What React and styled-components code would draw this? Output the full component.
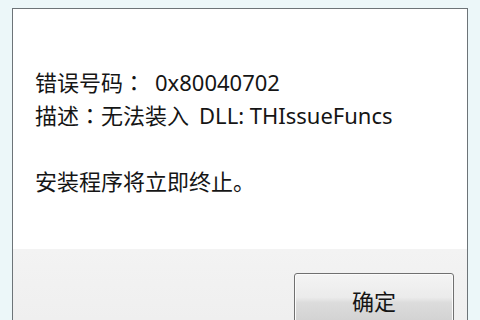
import React from 'react';
import styled, { createGlobalStyle } from 'styled-components';

const GlobalStyle = createGlobalStyle`
  html, body {
    margin: 0;
    padding: 0;
    width: 480px;
    height: 320px;
    overflow: hidden;
    background: #ecf7f9;
  }
`;

const Page = styled.div`
  box-sizing: border-box;
  width: 480px;
  height: 320px;
  padding: 8px 12px 0 12px;
  font-family: "Noto Sans", "Noto Sans CJK SC", sans-serif;
  color: #151515;
`;

const Dialog = styled.div`
  box-sizing: border-box;
  width: 456px;
  height: 312px;
  border: 1px solid #6d7478;
  border-bottom: none;
  background: #fdfdfd;
  display: flex;
  flex-direction: column;
`;

const Body = styled.div`
  height: 240px;
  flex-shrink: 0;
  box-sizing: border-box;
  padding: 56px 0 0 22px;
  background: #ffffff;
`;

const Line = styled.div`
  height: 33px;
  line-height: 33px;
  white-space: nowrap;
`;

const Cjk = styled.span`
  font-family: "Noto Sans CJK SC", sans-serif;
  font-size: 22px;
`;

/* full-width colon sits centred in the cell, as on Windows */
const Colon = styled.span`
  font-family: "Noto Sans CJK TC", "Noto Sans CJK SC", sans-serif;
  font-size: 22px;
`;

const Latin = styled.span`
  font-family: "Noto Sans", sans-serif;
  font-size: 22px;
  margin-left: ${p => p.$gap || '0'};
`;

const Footer = styled.div`
  flex: 1;
  overflow: hidden;
  background: linear-gradient(#f3f3f3, #efefef);
  display: flex;
  justify-content: flex-end;
  align-items: flex-start;
  padding: 24px 13px 0 0;
`;

const Button = styled.button`
  flex-shrink: 0;
  width: 160px;
  height: 54px;
  border: 1px solid #707070;
  border-radius: 3px;
  background: linear-gradient(#f4f4f4 0%, #ebebeb 45%, #dcdcdc 55%, #d0d0d0 100%);
  box-shadow: inset 0 0 0 1px #fbfbfb;
  font-family: "Noto Sans CJK SC", sans-serif;
  font-size: 22px;
  color: #151515;
  padding: 0;
  display: flex;
  align-items: center;
  justify-content: center;
`;

export default function App() {
  return (
    <Page>
      <GlobalStyle />
      <Dialog>
        <Body>
          <Line>
            <Cjk>错误号码</Cjk>
            <Colon>：</Colon>
            <Latin $gap="10px">0x80040702</Latin>
          </Line>
          <Line>
            <Cjk>描述</Cjk>
            <Colon>：</Colon>
            <Cjk>无法装入</Cjk>
            <Latin $gap="10px">DLL: THIssueFuncs</Latin>
          </Line>
          <Line />
          <Line>
            <Cjk>安装程序将立即终止。</Cjk>
          </Line>
        </Body>
        <Footer>
          <Button>确定</Button>
        </Footer>
      </Dialog>
    </Page>
  );
}
